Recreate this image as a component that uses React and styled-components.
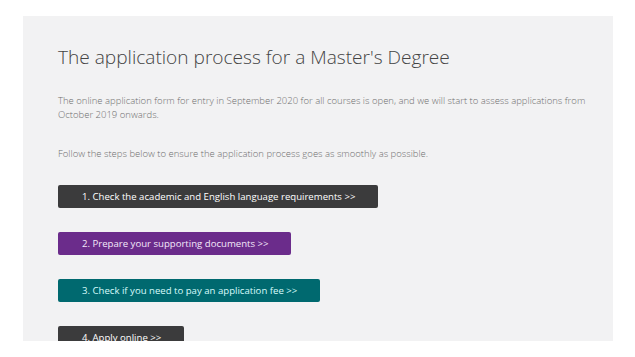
import React from 'react';
import styled, { createGlobalStyle } from 'styled-components';

const GlobalStyle = createGlobalStyle`
  html, body {
    margin: 0;
    padding: 0;
    background: #ffffff;
    font-family: "Open Sans", "Liberation Sans", sans-serif;
  }
`;

const Page = styled.div`
  width: 635px;
  height: 357px;
  overflow: hidden;
  padding-top: 16px;
  box-sizing: border-box;
`;

const Panel = styled.section`
  margin-left: 23px;
  width: 590px;
  height: 325px;
  overflow: hidden;
  background: #f2f2f3;
  padding: 28px 14px 0 35px;
  box-sizing: border-box;
`;

const Title = styled.h1`
  margin: 0;
  font-size: 19.1px;
  font-weight: 300;
  line-height: 27px;
  color: #444444;
`;

const Text = styled.p`
  margin: ${p => p.top}px 0 0;
  font-size: 9.5px;
  font-weight: 300;
  line-height: 14px;
  color: #6f6f6f;
`;

const Steps = styled.div`
  display: flex;
  flex-direction: column;
  align-items: flex-start;
  gap: 24px;
  margin-top: 24px;
`;

const StepButton = styled.a`
  display: block;
  height: 23px;
  width: ${p => p.width}px;
  box-sizing: border-box;
  padding-left: 24px;
  border-radius: 2px;
  background: ${p => p.bg};
  color: ${p => p.fg || '#ffffff'};
  font-size: 9.6px;
  line-height: 23px;
  text-decoration: none;
  white-space: nowrap;
`;

const steps = [
  { label: '1. Check the academic and English language requirements >>', bg: '#3b3b3c', width: 320 },
  { label: '2. Prepare your supporting documents >>', bg: '#6b2c8b', width: 233, fg: '#f4e8fa' },
  { label: '3. Check if you need to pay an application fee >>', bg: '#00696f', width: 262, fg: '#d8fbfb' },
  { label: '4. Apply online >>', bg: '#3b3b3c', width: 126 },
];

export default function App() {
  return (
    <>
      <GlobalStyle />
      <Page>
        <Panel>
          <Title>The application process for a Master's Degree</Title>
          <Text top={23}>
            The online application form for entry in September 2020 for all courses is open, and we will start to assess applications from October 2019 onwards.
          </Text>
          <Text top={25}>
            Follow the steps below to ensure the application process goes as smoothly as possible.
          </Text>
          <Steps>
            {steps.map(s => (
              <StepButton key={s.label} href="#" bg={s.bg} fg={s.fg} width={s.width}>
                {s.label}
              </StepButton>
            ))}
          </Steps>
        </Panel>
      </Page>
    </>
  );
}
